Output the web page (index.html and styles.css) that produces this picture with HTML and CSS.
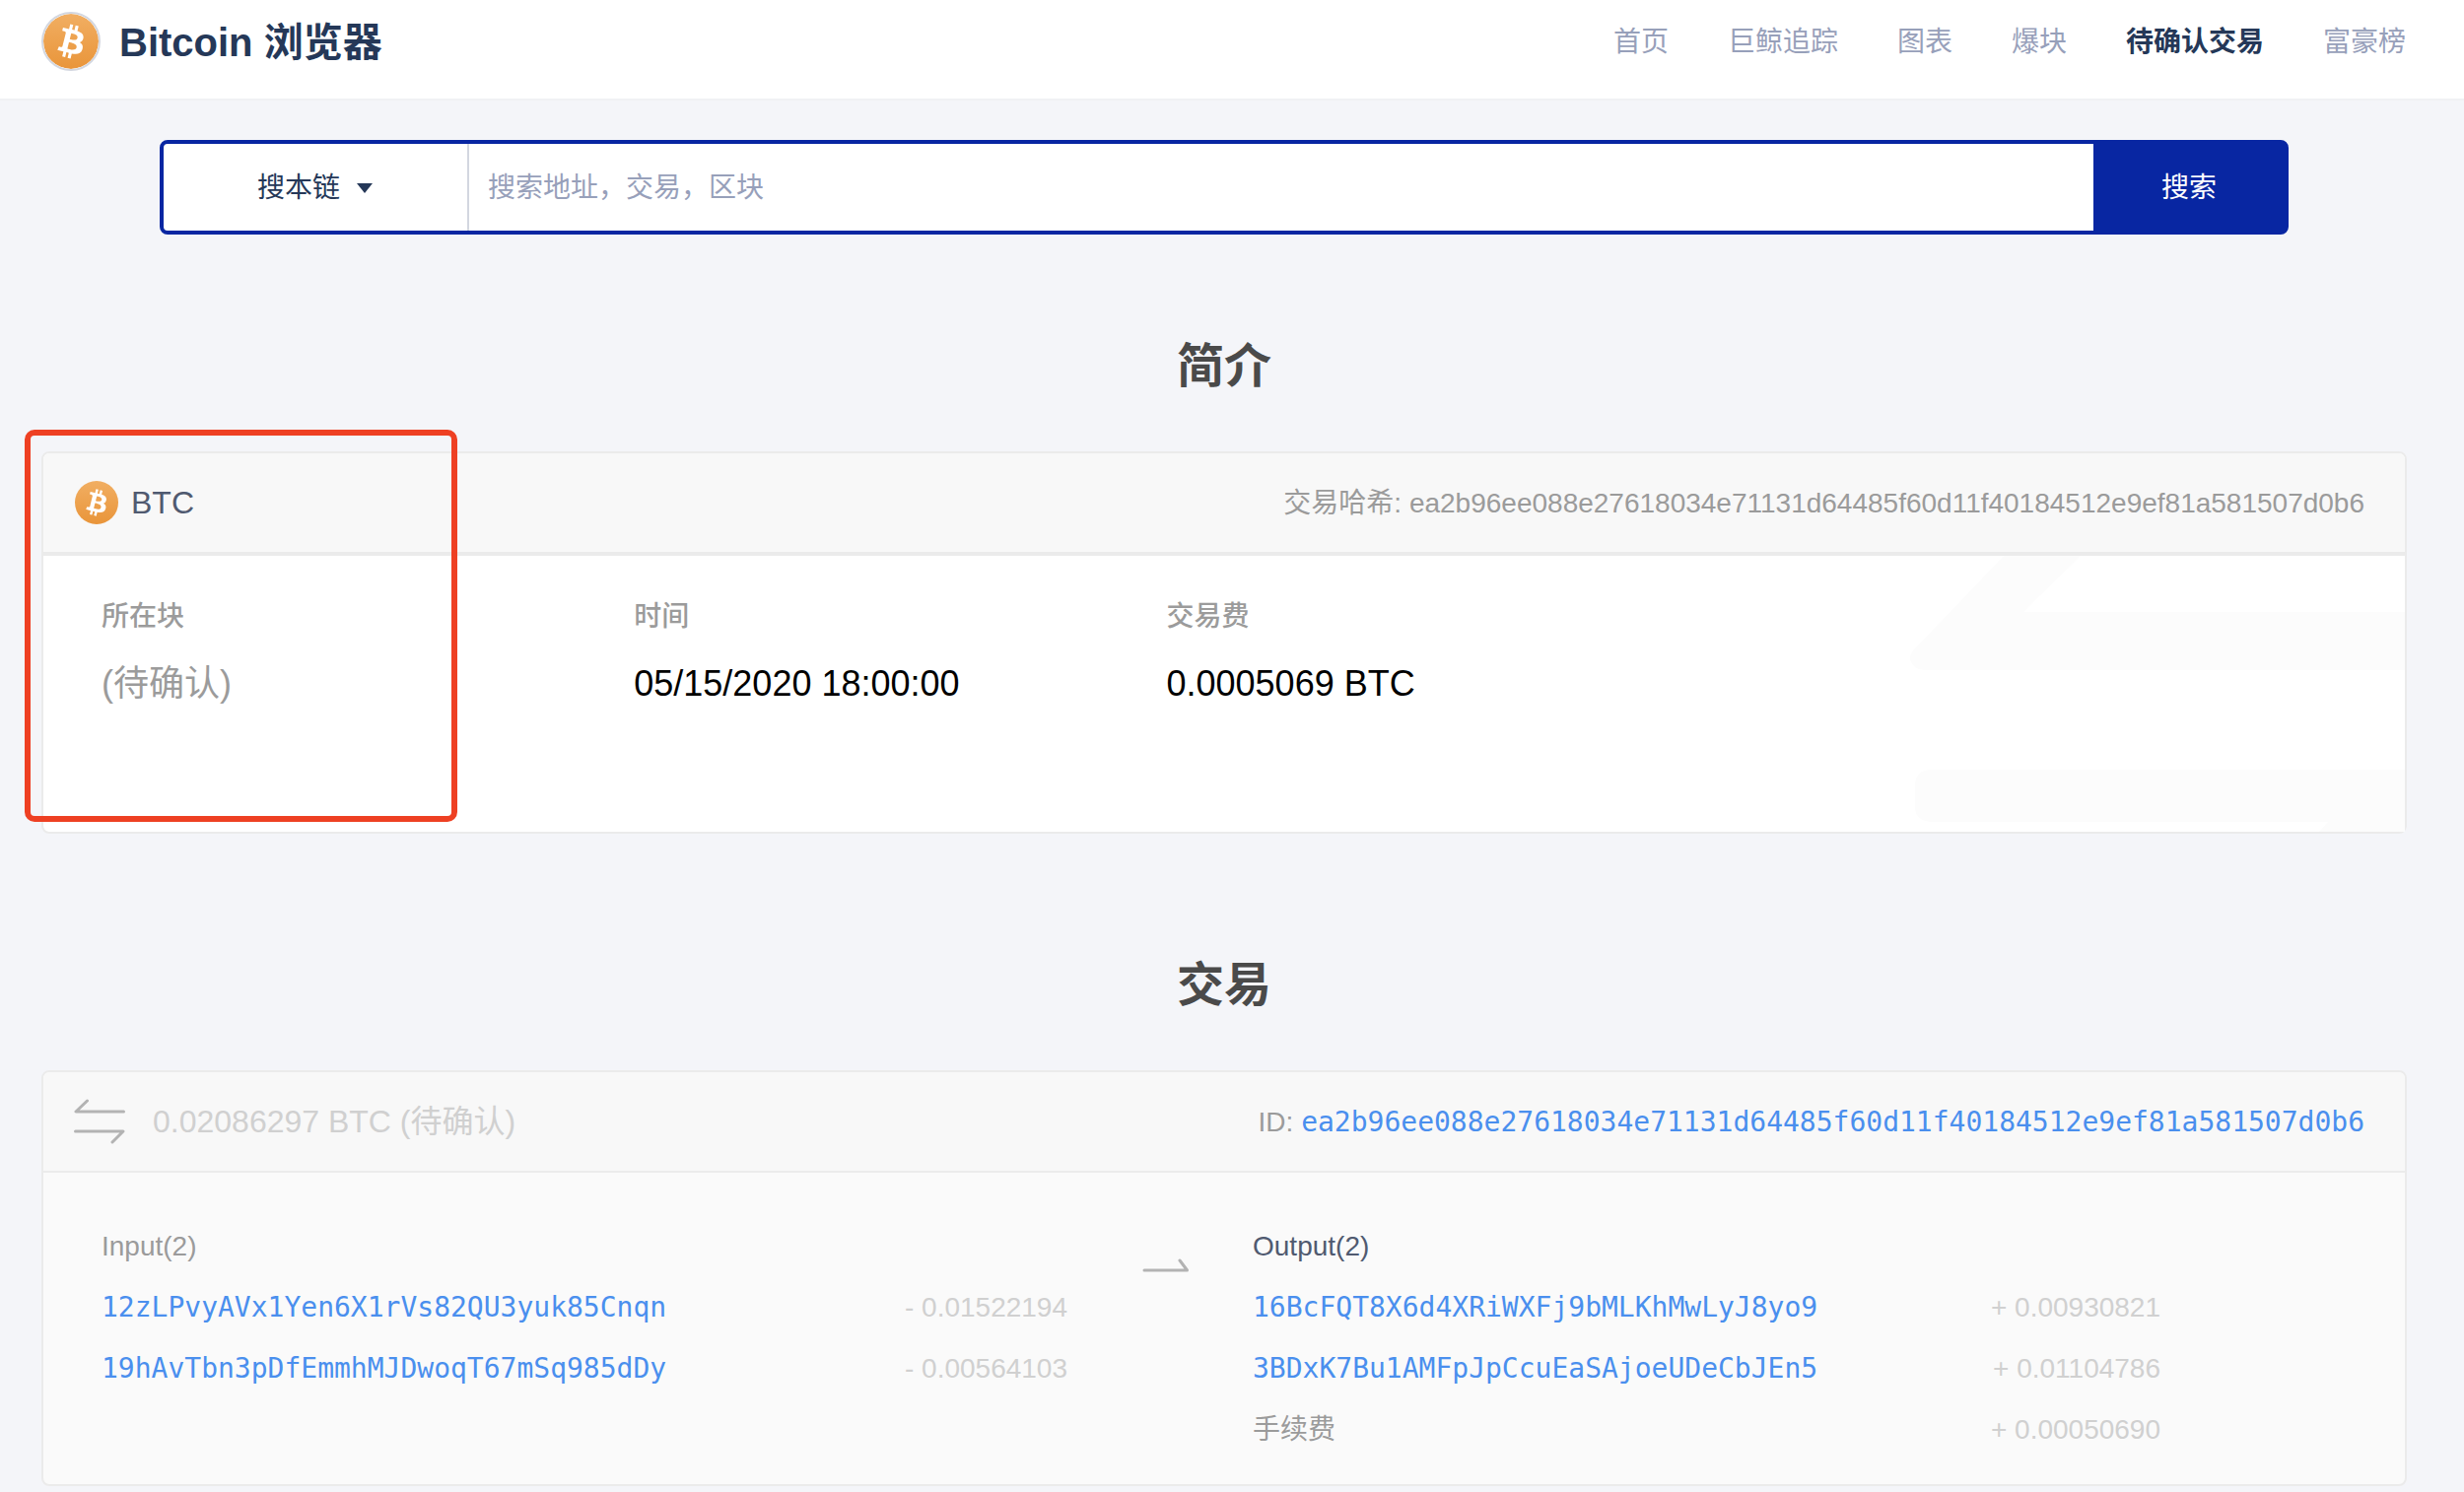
FILE: index.html
```html
<!DOCTYPE html>
<html lang="zh-CN">
<head>
<meta charset="utf-8">
<meta name="viewport" content="width=device-width, initial-scale=1">
<title>Bitcoin 浏览器</title>
<link rel="stylesheet" href="styles.css">
</head>
<body>
<svg class="defs" aria-hidden="true">
  <defs>
    <linearGradient id="orange" x1="0" y1="0" x2="0" y2="1">
      <stop offset="0" stop-color="#f1ae62"/>
      <stop offset="1" stop-color="#e9953a"/>
    </linearGradient>
    <symbol id="coin" viewBox="0 0 32 32">
      <circle cx="16" cy="16" r="16" fill="url(#orange)"/>
      <path fill="#fff" d="M23.189 14.02c.314-2.096-1.283-3.223-3.465-3.975l.708-2.84-1.728-.43-.69 2.765c-.454-.114-.92-.22-1.385-.326l.695-2.783L15.596 6l-.708 2.839c-.376-.086-.746-.17-1.104-.26l.002-.009-2.384-.595-.46 1.846s1.283.294 1.256.312c.7.175.826.638.805 1.006l-.806 3.235c.048.012.11.03.18.057l-.183-.045-1.13 4.532c-.086.212-.303.531-.793.41.018.025-1.256-.313-1.256-.313l-.858 1.978 2.25.561c.418.105.828.215 1.231.318l-.715 2.872 1.727.43.708-2.84c.472.127.93.245 1.378.357l-.706 2.828 1.728.43.715-2.866c2.948.558 5.164.333 6.097-2.333.752-2.146-.037-3.385-1.588-4.192 1.13-.26 1.98-1.003 2.207-2.538zm-3.95 5.538c-.533 2.147-4.148.986-5.32.695l.95-3.805c1.172.293 4.929.872 4.37 3.11zm.535-5.569c-.487 1.953-3.495.96-4.47.717l.86-3.45c.975.243 4.118.696 3.61 2.733z"/>
    </symbol>
  </defs>
</svg>

<header class="site-header">
  <a class="brand" href="#">
    <svg class="brand-logo"><use href="#coin"/></svg>
    <span>Bitcoin 浏览器</span>
  </a>
  <nav class="site-nav">
    <a href="#">首页</a>
    <a href="#">巨鲸追踪</a>
    <a href="#">图表</a>
    <a href="#">爆块</a>
    <a class="active" href="#" aria-current="page">待确认交易</a>
    <a href="#">富豪榜</a>
  </nav>
</header>

<main class="page">
  <form class="search">
    <div class="scope">
      <select class="scope-select" aria-label="搜索范围">
        <option>搜本链</option>
      </select>
      <svg class="scope-caret" viewBox="0 0 16 10"><path d="M0 0h16L8 10z" fill="#253858"/></svg>
    </div>
    <input class="search-input" type="text" placeholder="搜索地址，交易，区块" aria-label="搜索">
    <button class="search-button" type="submit">搜索</button>
  </form>

  <h2 class="section-title">简介</h2>
  <section class="card summary">
    <div class="card-head summary-head">
      <div class="coin">
        <svg class="coin-icon"><use href="#coin"/></svg>
        <span>BTC</span>
      </div>
      <div class="hash">交易哈希: ea2b96ee088e27618034e71131d64485f60d11f40184512e9ef81a581507d0b6</div>
    </div>
    <div class="summary-body">
      <svg class="watermark" viewBox="0 0 502 280" aria-hidden="true">
        <path fill="#fcfcfc" d="M95 0L6 93Q0 98 0 105Q3 116 15 116H502V57H115L173 0Z"/>
        <path fill="#fcfcfc" d="M20 217H502V280H415L424 270H20Q5 268 5 255V232Q6 218 20 217Z"/>
      </svg>
      <dl class="facts">
        <div><dt>所在块</dt><dd class="pending">(待确认)</dd></div>
        <div><dt>时间</dt><dd>05/15/2020 18:00:00</dd></div>
        <div><dt>交易费</dt><dd>0.0005069 BTC</dd></div>
      </dl>
    </div>
    <div class="highlight"></div>
  </section>

  <h2 class="section-title">交易</h2>
  <section class="card tx">
    <div class="card-head tx-head">
      <div class="tx-total">
        <svg class="swap" viewBox="0 0 52 46" fill="none" stroke="#b3b3b3" stroke-width="3" stroke-linecap="round" stroke-linejoin="round">
          <path d="M13.500 2L2 13H50.500M1.500 33H50L39 44"/>
        </svg>
        <span>0.02086297 BTC (待确认)</span>
      </div>
      <div class="hash">ID: <a class="mono" href="#">ea2b96ee088e27618034e71131d64485f60d11f40184512e9ef81a581507d0b6</a></div>
    </div>
    <div class="tx-body">
      <table class="flow">
        <thead><tr><th class="from" colspan="2">Input(2)</th></tr></thead>
        <tbody>
          <tr><td><a class="mono" href="#">12zLPvyAVx1Yen6X1rVs82QU3yuk85Cnqn</a></td><td class="amount">- 0.01522194</td></tr>
          <tr><td><a class="mono" href="#">19hAvTbn3pDfEmmhMJDwoqT67mSq985dDy</a></td><td class="amount">- 0.00564103</td></tr>
        </tbody>
      </table>
      <svg class="arrow" viewBox="0 0 48 14" fill="none" stroke="#b3b3b3" stroke-width="3" stroke-linecap="round" stroke-linejoin="round">
        <path d="M2 12H45.500L38 2"/>
      </svg>
      <table class="flow">
        <thead><tr><th class="to" colspan="2">Output(2)</th></tr></thead>
        <tbody>
          <tr><td><a class="mono" href="#">16BcFQT8X6d4XRiWXFj9bMLKhMwLyJ8yo9</a></td><td class="amount">+ 0.00930821</td></tr>
          <tr><td><a class="mono" href="#">3BDxK7Bu1AMFpJpCcuEaSAjoeUDeCbJEn5</a></td><td class="amount">+ 0.01104786</td></tr>
          <tr><td class="fee">手续费</td><td class="amount">+ 0.00050690</td></tr>
        </tbody>
      </table>
    </div>
  </section>
</main>
</body>
</html>
```

FILE: styles.css
```css
* {
  box-sizing: border-box;
}

body {
  margin: 0;
  background: #f4f5f9;
  color: #253858;
  font-family: "Liberation Sans", "Noto Sans CJK SC", sans-serif;
  font-size: 28px;
  line-height: 40px;
}

a {
  color: inherit;
  text-decoration: none;
}

.defs {
  display: block;
  width: 0;
  height: 0;
}

.site-header {
  display: flex;
  align-items: center;
  justify-content: space-between;
  height: 102px;
  padding: 0 59px 16px 42px;
  background: #fff;
  border-bottom: 2px solid #f0f1f4;
}

.brand {
  display: flex;
  align-items: center;
  gap: 19px;
  font-size: 40px;
  font-weight: 700;
}

.brand span {
  padding-top: 2px;
}

.brand-logo {
  width: 60px;
  height: 60px;
  border: 2px solid #d3d7e0;
  border-radius: 50%;
}

.site-nav {
  display: flex;
  gap: 60px;
  padding-top: 2px;
  color: #97a0ba;
}

.site-nav .active {
  color: #253858;
  font-weight: 700;
}

.page {
  padding: 40px 58px 6px 42px;
}

.search {
  display: flex;
  width: 90%;
  height: 96px;
  margin: 0 auto;
  background: #fff;
  border: 4px solid #0826a2;
  border-radius: 8px;
}

.scope {
  position: relative;
  width: 310px;
  border-right: 2px solid #d3d7e0;
}

.scope-select,
.search-input,
.search-button {
  height: 100%;
  border: 0;
  outline: 0;
  font: inherit;
}

.scope-select {
  width: 100%;
  padding: 2px 95px 0;
  background: transparent;
  color: #253858;
  appearance: none;
}

.scope-caret {
  position: absolute;
  top: 40px;
  right: 96px;
  width: 16px;
  height: 10px;
  pointer-events: none;
}

.search-input {
  flex: 1;
  padding: 2px 19px 0;
  background: transparent;
  color: #253858;
}

.search-input::placeholder {
  color: #97a0ba;
  opacity: 1;
}

.search-button {
  width: 194px;
  padding-top: 3px;
  background: #0826a2;
  color: #fff;
}

.section-title {
  margin: 102px 0 54px;
  color: #4a4a4a;
  font-size: 48px;
  font-weight: 700;
  line-height: 64px;
  text-align: center;
}

.card {
  position: relative;
  border: 2px solid #ebebeb;
  border-radius: 8px;
}

.card + .section-title {
  margin-top: 122px;
}

.card-head {
  display: flex;
  align-items: center;
  justify-content: space-between;
  padding: 0 41px 0 32px;
  background: #f8f8f8;
  border-bottom: 2px solid #ebebeb;
  border-radius: 6px 6px 0 0;
}

.summary {
  background: #fff;
}

.summary-head {
  height: 104px;
  border-bottom-width: 4px;
}

.tx-head {
  height: 102px;
}

.coin {
  display: flex;
  align-items: center;
  gap: 13px;
  color: #505a70;
  font-size: 32px;
}

.coin-icon {
  width: 44px;
  height: 44px;
}

.hash {
  padding-top: 2px;
  color: #9b9b9b;
}

.mono {
  color: #4a8fee;
  font-family: "DejaVu Sans Mono", monospace;
}

.summary-body {
  position: relative;
  min-height: 280px;
  padding: 42px 176px 0 59px;
}

.watermark {
  position: absolute;
  top: 0;
  right: 0;
  height: 280px;
}

.facts {
  position: relative;
  display: grid;
  grid-template-columns: repeat(4, 1fr);
  margin: 0;
}

.facts dt {
  color: #9b9b9b;
  font-weight: 500;
}

.facts dd {
  margin: 22px 0 0;
  color: #000;
  font-size: 36px;
  line-height: 52px;
}

.facts .pending {
  color: #9b9b9b;
}

/* Marker drawn around the confirmation block */
.highlight {
  position: absolute;
  top: -24px;
  bottom: 10px;
  left: -19px;
  width: 439px;
  border: 6px solid #ee4023;
  border-radius: 10px;
}

.tx {
  background: #fafafa;
}

.tx-head {
  padding-left: 31px;
}

.tx-total {
  display: flex;
  align-items: center;
  gap: 28px;
  color: #d0d0d0;
  font-size: 32px;
}

.swap {
  width: 52px;
  height: 46px;
}

.tx-body {
  display: grid;
  grid-template-columns: 980fr 188fr 921fr;
  padding: 44px 248px 24px 59px;
}

.flow {
  width: 100%;
  align-self: start;
  border-collapse: collapse;
}

.flow th,
.flow td {
  height: 62px;
  padding: 0;
  text-align: left;
  font-weight: 400;
}

.flow .from,
.flow .fee {
  color: #9b9b9b;
}

.flow .to {
  color: #505a70;
}

.flow .amount {
  color: #d0d0d0;
  text-align: right;
}

.arrow {
  width: 48px;
  height: 14px;
  margin: 43px 64px 0 auto;
}
```
